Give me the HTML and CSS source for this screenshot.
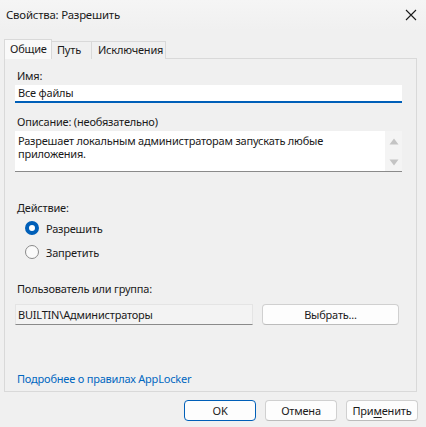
FILE: index.html
```html
<!DOCTYPE html>
<html lang="ru">
<head>
<meta charset="utf-8">
<link rel="stylesheet" href="styles.css">
</head>
<body>
<div class="window">
  <div class="titlebar">
    <span class="title">Свойства: Разрешить</span>
    <svg class="close" width="12" height="12" viewBox="0 0 12 12"><path d="M1 1 L11 11 M11 1 L1 11" stroke="#1a1a1a" stroke-width="1.1" fill="none"/></svg>
  </div>
  <div class="tabs">
    <div class="tab active">Общие</div>
    <div class="tab">Путь</div>
    <div class="tab">Исключения</div>
  </div>
  <div class="panel">
    <div class="label first">Имя:</div>
    <div class="input name">Все файлы</div>
    <div class="label">Описание: (необязательно)</div>
    <div class="textarea">
      <div class="tatext">Разрешает локальным администраторам запускать любые приложения.</div>
      <div class="scroll">
        <svg width="10" height="7" viewBox="0 0 10 7"><path d="M5 0.5 L9.5 6.5 L0.5 6.5 Z" fill="#c4c4c4"/></svg>
        <svg width="10" height="7" viewBox="0 0 10 7"><path d="M0.5 0.5 L9.5 0.5 L5 6.5 Z" fill="#c4c4c4"/></svg>
      </div>
    </div>
    <div class="label action">Действие:</div>
    <div class="radio"><span class="dot on"></span>Разрешить</div>
    <div class="radio second"><span class="dot"></span>Запретить</div>
    <div class="label user">Пользователь или группа:</div>
    <div class="userrow">
      <div class="input ro">BUILTIN\Администраторы</div>
      <div class="btn wide">Выбрать...</div>
    </div>
    <div class="spacer"></div>
    <div class="link">Подробнее о правилах AppLocker</div>
  </div>
  <div class="footer">
    <div class="btn def">OK</div>
    <div class="btn">Отмена</div>
    <div class="btn">При<u>м</u>енить</div>
  </div>
</div>
</body>
</html>
```
FILE: styles.css
```css
* { box-sizing: border-box; }
html, body { margin: 0; padding: 0; }
body {
  width: 426px;
  height: 427px;
  background: #f0f0f0;
  font-family: "Noto Sans", "Open Sans", sans-serif;
  font-size: 11px;
  letter-spacing: -0.2px;
  color: #1a1a1a;
  overflow: hidden;
}
.window {
  display: flex;
  flex-direction: column;
  height: 427px;
  background: #f0f0f0;
}
.titlebar {
  height: 30px;
  display: flex;
  align-items: center;
  justify-content: space-between;
  padding: 0 9px 2px 6px;
  background: linear-gradient(#f5f5f5, #f0f0f0);
}
.title { font-size: 11.4px; }
.close { display: block; margin-top: 2px; }
.tabs {
  display: flex;
  align-items: flex-end;
  height: 28px;
  padding-left: 4px;
  position: relative;
  z-index: 1;
}
.tab {
  height: 18px;
  border: 1px solid #d9d9d9;
  border-bottom: none;
  background: #f0f0f0;
  line-height: 16px;
  margin-bottom: -1px;
  padding-left: 5px;
}
.tab + .tab { border-left: none; }
.tab.active {
  height: 20px;
  background: #f9f9f9;
  line-height: 18px;
  position: relative;
  z-index: 2;
  width: 48px;
}
.tab:nth-child(2) { width: 40px; }
.tab:nth-child(3) { width: 74px; padding-left: 6px; }
.panel {
  margin: 0 9px 0 4px;
  height: 334px;
  border: 1px solid #d9d9d9;
  background: #f0f0f0;
  padding: 0 14px 0 10px;
  display: flex;
  flex-direction: column;
}
.label { padding-left: 2px; height: 16px; line-height: 16px; }
.label.first { margin-top: 9px; }
.input {
  background: #fff;
  padding-left: 3px;
}
.input.name {
  margin-top: 1px;
  height: 18px;
  line-height: 16px;
  border-bottom: 2px solid #005fb8;
  margin-bottom: 11px;
}
.textarea {
  margin-top: 1px;
  height: 41px;
  background: #fff;
  border-bottom: 1px solid #8a8a8a;
  display: flex;
  justify-content: space-between;
}
.tatext { padding: 3px 0 0 3px; line-height: 13px; width: 360px; }
.scroll {
  width: 17px;
  background: #f4f4f4;
  display: flex;
  flex-direction: column;
  align-items: center;
  justify-content: space-between;
  padding: 7px 0 5px;
}
.scroll svg { display: block; }
.label.action { margin-top: 28px; }
.radio {
  display: flex;
  align-items: center;
  height: 20px;
  margin-top: 2px;
  padding-left: 10px;
}
.radio.second { margin-top: 4px; }
.dot {
  width: 14px;
  height: 14px;
  border-radius: 50%;
  border: 1px solid #8a8a8a;
  background: #fafafa;
  margin-right: 7px;
}
.dot.on {
  border: 4px solid #005fb8;
  background: #fff;
}
.label.user { margin-top: 19px; }
.userrow {
  display: flex;
  gap: 9px;
  margin-top: 7px;
}
.input.ro {
  width: 238px;
  height: 21px;
  background: #f3f3f3;
  border: 1px solid #e4e4e4;
  border-bottom-color: #8a8a8a;
  line-height: 19px;
  padding-left: 2px;
}
.btn {
  height: 21px;
  width: 72px;
  border: 1px solid #d0d0d0;
  border-bottom-color: #bcbcbc;
  border-radius: 4px;
  background: #fdfdfd;
  display: flex;
  align-items: center;
  justify-content: center;
}
.btn.wide { width: 137px; }
.btn u { text-decoration-thickness: 1px; text-underline-offset: 2px; }
.spacer { flex: 1; }
.link {
  color: #0067c0;
  padding-left: 2px;
  margin-bottom: 4px;
  height: 16px;
  line-height: 16px;
}
.footer {
  display: flex;
  justify-content: flex-end;
  gap: 9px;
  padding: 8px 8px 0 0;
}
.btn.def {
  border: 1px solid #005fb8;
}
```
